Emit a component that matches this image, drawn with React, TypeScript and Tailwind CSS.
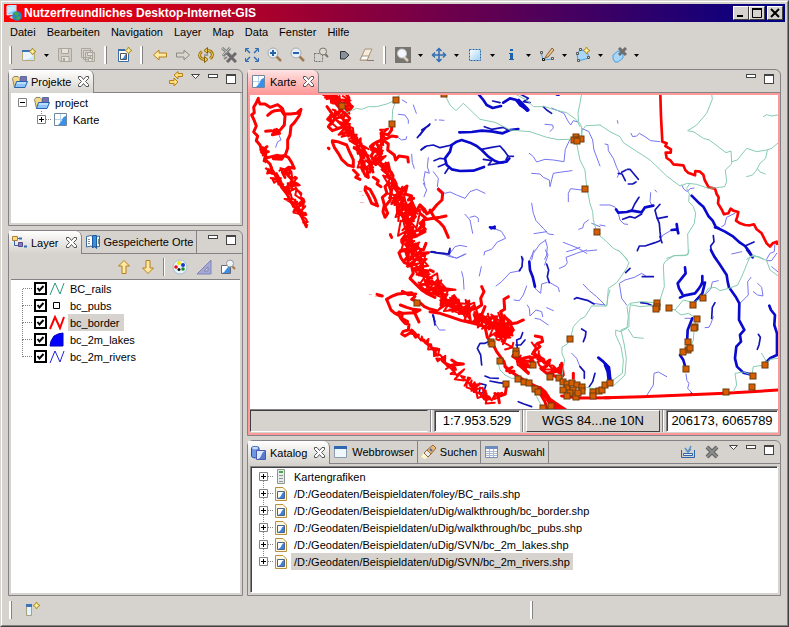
import type { ReactNode } from 'react';

/* ---------- map data ---------- */

type Tile = {
  x: number;
  y: number;
  rails: string[];
  rivers: string[];
  lakes: string[];
  wide: string[];
  border: string[];
};

// Each tile is digitised at three units per map pixel.
const tiles: Tile[] = [
  {
    x: 245,
    y: 90,
    rails: [
      '290,50 305,68 335,55 350,58 370,50 395,50 425,42 454,30 463,14',
      '450,38 443,60 441,103',
    ],
    rivers: [
      '92,172 98,155 108,150 102,135',
      '472,30 485,38',
      '505,45 514,70',
      '460,73 480,75 490,90 490,100',
      '460,143 470,150 483,148 485,140',
      '500,193 502,218 508,235',
      '540,247 536,270 540,285',
    ],
    lakes: ['517,143 540,116', '528,180 540,170'],
    wide: [],
    border: [
      '40,25 34,38 26,52 28,68 20,75 28,92 34,108 26,126 38,138 34,152 45,165 50,180 62,190 62,210 75,222 80,235',
      '40,30 45,42 60,42 75,52 98,44 112,55 118,72 136,72 155,70 168,58 162,78 148,98 138,108 135,135 128,150 128,175 122,192',
      '68,76 80,66 90,62 108,60 120,78 118,105 104,122 88,120',
      '62,124 78,122 104,130 82,134 95,118',
      '48,172 62,178 55,190 70,185 50,182 66,170',
      '60,205 80,200 95,196 115,200 110,208 85,206 118,196 130,202 140,218 148,235 130,232 120,240 128,250 112,246 120,262',
      '78,235 96,262 110,292 126,312 142,342 160,366 170,380 184,410',
      '150,262 154,264',
      '236,14 250,18 246,26 262,22 270,14 284,28 272,40 290,62 300,70',
      '305,14 312,24 302,34 322,50 314,60',
      '246,50 262,72 248,88 260,96 250,110 262,122 290,112 300,96 290,80 270,86 258,102',
      '300,70 314,85 298,110 312,128 330,140 345,160 360,185 372,210 382,240',
      '262,152 278,155 305,165 312,182 325,210 325,230 308,225 290,208 280,190 268,172 262,156',
      '250,174 252,176',
      '325,240 340,255 332,262 345,268',
      '345,190 352,212 350,235 362,258 370,262 366,240 356,222',
      '440,106 440,120 430,134 408,130 412,150 395,156 385,162 376,170 388,182 378,198 388,212 376,228 384,246',
      '412,148 430,162 428,180 448,195 452,210 462,198 488,202 490,216',
      '425,146 440,138 456,140',
      '395,160 410,190 398,206 412,225 432,238 444,256 442,278 456,290',
      '362,292 375,298 390,326 398,348 380,340 370,318 360,300 362,290',
      '432,278 420,290 426,310 412,322 418,345 414,365 420,382 428,370 420,350 436,330 438,300 430,280',
      '385,262 400,272 396,282 408,290',
      '450,290 470,300 486,288 480,312 500,318 490,330 506,325',
      '436,434 440,442',
      '470,350 500,345 480,370 510,376 490,400 525,345 538,365',
      '490,430 520,420 536,400',
      '486,440 510,440 540,425',
      '466,485 480,478 488,500 480,510',
      '490,460 490,510',
    ],
  },
  {
    x: 420,
    y: 90,
    rails: [
      '75,15 90,45 108,62 130,40 145,54 180,88 225,97 270,120 330,125 380,142 415,149 445,148 466,145',
      '285,12 320,30 340,50 375,50 398,58 440,68 470,90 480,110',
      '485,12 480,40 474,70 476,95 485,110 485,140',
      '540,105 498,107 487,120 485,135 470,150',
      '470,160 480,210 495,240 500,290 510,340 518,365 520,390 530,425',
    ],
    rivers: [
      '395,54 432,70 442,90 452,105 460,92 474,96',
      '375,103 398,105 400,115 390,124',
      '486,116 506,124 518,150 522,180 540,228',
      '450,148 436,178 432,215 400,210 375,208 350,216 340,200 328,190',
      '335,250 360,252 370,262 388,270 390,290 400,250 425,246 456,242',
      '485,300 452,296 445,310 445,335',
      '505,390 492,400 488,414 476,418',
      '515,400 540,410',
      '335,340 340,370 348,392 370,415 385,432 400,434',
      '380,425 342,431',
      '378,450 360,462 340,490 335,510',
      '376,450 382,470 380,495 374,508',
      '430,457 450,465 475,475 500,490',
      '480,472 460,480 440,485',
      '40,245 55,265 52,290 75,310 90,306 110,315 135,325 150,305 170,298 195,310',
      '25,203 22,230 28,250 15,245',
      '10,280 20,300 12,320',
      '135,373 150,390 158,430',
      '150,382 165,378 175,385 175,395',
      '222,415 244,424 257,445 232,456 215,478 194,485 192,495',
      '90,490 105,470 120,466 140,470',
      '85,495 110,505 138,492',
      '45,90 50,90',
      '58,90 72,91',
    ],
    lakes: [
      '218,33 240,38',
      '300,12 325,25 310,35 330,38',
      '193,110 215,118 250,112 268,122',
      '5,178 20,168 40,165 60,173 95,165',
      '42,212 60,205 75,207',
      '55,230 75,222',
      '75,250 85,235',
      '190,208 215,212 205,225 250,218',
      '185,178 215,172 240,168 255,185 264,198 280,199',
      '264,198 258,210',
      '0,135 12,118 30,102',
      '5,120 28,106',
      '35,486 60,490 85,492 90,475',
      '370,50 380,60 395,70',
      '305,500 308,510',
    ],
    wide: [
      '175,12 190,30 200,45 218,54 243,48',
      '250,38 270,25 290,30 300,45 325,60',
      '290,32 322,62',
      '296,30 322,56',
      '118,127 155,126 185,122 215,124 248,130 270,120 295,117',
      '95,165 110,155 125,150 150,158 170,168 185,180 205,200 225,213 240,218 260,215 268,205',
      '95,165 90,185 75,205 80,225 95,238 120,243 160,242 192,231',
      '210,412 224,415',
      '214,415 224,410',
      '410,13 416,14',
    ],
    border: [
      '0,345 14,358 20,372 38,360 50,345 66,330 68,310 55,298',
      '0,415 12,405 10,390 40,385 60,382 78,378',
      '30,360 44,385 60,398 72,412 85,442',
      '0,370 18,385 0,400 16,418 0,425',
      '18,460 10,480 0,478',
      '0,490 25,488 10,495',
    ],
  },
  {
    x: 600,
    y: 90,
    rails: [
      '0,105 30,125 60,140 70,158 150,210 200,258 240,288 262,280 290,283 325,295 350,293 374,290 380,275 376,240 395,222 395,215',
      '335,12 337,28 320,70 290,105 263,122 282,126 310,145 328,150 378,188 393,183 395,215 412,210 440,175 470,185 500,180 515,175 533,160',
      '502,182 497,205 480,220 470,240 458,255 440,260',
      '472,235 480,246 496,252',
      '490,80 500,74 515,78 533,75',
      '270,280 260,295 268,312 266,335 280,350 287,370 283,400 263,432 265,490 255,497 225,497 200,505',
      '0,438 20,455 40,475 60,485 82,508',
      '440,508 460,495 490,508',
    ],
    rivers: [
      '93,130 98,140 110,138 118,130 135,140 152,152 180,155',
      '15,162 24,164 25,182 40,205 50,232 58,248 52,262',
      '0,345 30,345 46,352',
      '55,370 60,390 72,402 83,403',
      '245,285 252,298 262,305 270,296 282,294',
      '365,410 374,405 380,382 405,370',
      '525,460 523,485 510,490 500,508',
      '152,308 150,335 155,344',
      '180,450 188,436 215,420',
      '52,92 54,100',
      '165,300 170,306',
      '0,405 15,408',
    ],
    lakes: [
      '65,247 78,240',
      '82,238 90,238 100,250 115,268',
      '55,250 66,252 76,272',
      '85,282 98,282 108,276',
      '95,362 104,342 117,322',
      '68,388 90,380 105,384 125,372',
      '180,343 165,360 170,380 178,400 180,425 182,440',
      '172,386 202,380',
      '112,482 118,468 135,468 165,458 180,452',
      '180,440 186,458',
      '340,437 342,455 332,468 334,485 350,508',
      '435,468 462,456',
    ],
    wide: [
      '48,358 55,368 80,366 95,362 125,367 135,352 160,347',
      '215,420 232,418 235,430',
      '275,317 298,340 310,350 325,378 338,392 348,412 375,425 400,440 420,458 435,468 448,485 458,502',
      '345,412 355,414',
      '230,402 232,416',
    ],
    border: [],
  },
  {
    x: 245,
    y: 250,
    rails: [],
    rivers: [],
    lakes: ['563,195 570,215', '560,5 570,6'],
    wide: [],
    border: [
      '425,148 438,140 458,132 480,130 500,128 510,140 500,148 525,158 538,170 552,176 575,182',
      '425,148 432,165 438,180 450,190 462,196 468,206 480,220 492,224 490,240 475,244 470,252 480,258 496,248 500,240 512,252',
      '466,165 485,172 505,178 525,180 510,188 480,190 455,190',
      '505,182 512,195 522,216',
      '462,186 472,190 470,205 488,215',
      '472,124 490,134 512,132',
      '396,133 412,138 400,136',
      '462,8 468,24 478,38 490,42 488,20 482,2 466,2',
      '500,50 505,70 495,85 510,100 530,120 545,130 570,142',
      '512,60 548,62 530,75 560,85',
    ],
  },
  {
    x: 430,
    y: 250,
    rails: [
      '540,120 534,140 530,168 485,168 465,200 450,208 430,230 422,265 412,282 396,292 396,310 404,330 398,365 396,385',
      '205,340 210,360 225,375 245,385 265,385 300,405 320,440 336,470',
      '440,410 470,412 500,418 530,405',
    ],
    rivers: [
      '198,108 215,95 240,68 272,62',
      '346,0 354,15 344,45',
      '355,95 372,105 385,112 388,125',
      '312,110 320,120 332,130 335,102 352,97',
      '312,0 306,15 300,28',
      '388,55 405,48 412,38 408,22 440,10 470,0',
      '252,150 268,152 280,135 290,108',
      '292,165 298,175 300,198 318,180 335,185 338,200',
      '315,205 330,208 355,225',
      '350,173 370,182',
      '460,103 478,122 500,140 525,165',
      '490,160 525,165',
      '148,78 154,50',
      '95,65 100,85 102,118',
      '10,5 40,12 60,20 80,24 105,12',
      '15,220 28,240 45,240',
      '425,310 440,325 450,350',
      '470,3 500,0',
    ],
    lakes: [
      '278,25 276,50 268,62',
      '433,147 440,143 460,148 475,152 492,162',
      '10,195 15,225',
      '455,237 468,245 466,260 460,275',
      '175,275 165,280 150,280 142,295 152,315 155,345',
      '262,295 260,270 272,265 278,248',
      '258,285 272,285 285,270',
      '165,378 180,384 205,385',
      '180,393 205,398 225,400',
      '148,400 168,405 160,428 148,430 150,412',
      '265,455 282,462 305,470',
      '495,370 488,395 478,410',
      '450,350 463,365 463,385',
      '350,42 356,60 352,80 358,98',
      '0,6 40,10 58,12 60,0',
    ],
    wide: ['298,35 300,60 308,80 315,110', '505,323 520,335 535,352 540,385'],
    border: [
      '0,60 10,65',
      '155,110 162,125 152,145 155,165 140,175 120,178 105,190',
      '235,140 222,148 224,178 212,185 220,210 205,225',
      '280,210 262,218 240,222 250,240 230,250',
      '165,170 155,195 170,210',
      '0,185 30,190 60,200 95,212 130,220 165,230 172,262 190,285 200,305 222,335 226,350 250,370 290,395 310,405 330,415',
      '225,350 240,368 252,364 230,362 246,352',
      '316,258 335,262 338,275 322,280 330,290 312,305 320,320 300,325',
      '250,320 280,340 300,350 270,348 295,370 262,330 310,335 300,320 280,325',
      '330,325 345,340 360,330 350,348 332,355 350,370 376,365 398,345 392,370 372,352 362,372 388,385',
      '395,340 400,375 392,385',
      '430,370 430,385',
      '230,405 226,432 205,440 208,458',
      '65,330 80,340 100,342 72,345',
      '330,412 345,425 360,448 385,465 408,480',
      '330,430 345,455 352,480',
      '320,412 350,445 375,480',
      '335,425 370,462 395,478',
      '326,415 340,432 362,462 385,478',
      '395,438 450,444 540,443',
    ],
  },
  {
    x: 605,
    y: 250,
    rails: [
      '252,0 248,15 225,16 205,17 180,35 175,45 178,110 165,150',
      '40,0 60,22 72,38 65,55 48,80 35,98 10,115 6,165 0,168',
      '150,158 110,155 75,160 66,170 70,200 66,235 45,245 32,240 32,255 48,290 55,330 52,370 18,395',
      '150,166 105,170 76,164 72,195 72,230 48,240 58,285 64,325 60,375 28,405',
      '70,238 85,262 115,265',
      '190,175 210,180 235,150 265,158 293,143 310,115 330,112 345,122 372,115 398,105 410,80 435,20 462,20 485,32 495,60 520,78',
      '210,180 228,195 250,190 275,205 268,235 265,270 255,295',
      '440,375 415,366 390,370 395,405 385,425',
      '440,380 445,350 480,345 495,328 520,325',
      '470,310 490,345 470,350',
    ],
    rivers: [
      '125,437 145,405 147,370 160,366 185,380',
      '65,165 50,145 43,100 60,90 88,82 110,70 125,80',
      '243,372 246,392 252,400 248,415 262,430',
      '340,92 322,96 318,115 305,130 290,140',
      '325,200 318,220 312,232 300,233',
      '438,82 428,95 430,135 405,160',
      '445,125 458,135 474,138 470,112 458,100',
      '485,32 500,32 515,10',
      '500,50 518,65',
      '380,12 410,5',
      '240,205 260,205',
    ],
    lakes: [
      '75,55 62,68',
      '107,158 125,160 142,167',
      '112,80 145,80',
      '330,158 322,172 320,205',
      '460,253 466,262 462,285 457,298',
      '425,0 440,20',
      '258,430 262,432',
    ],
    wide: [
      '240,52 242,70 218,100 222,115 232,132',
      '225,143 240,136 270,130 282,115 292,100 292,78',
      '290,100 300,98 292,130 270,155',
      '262,205 248,240 246,280',
      '225,315 235,330 242,355',
      '318,0 328,20 342,40 365,75 368,95 372,112 392,140 403,160 402,210 418,240 405,255 408,275 394,290 390,325 396,350 415,368 440,374',
      '493,167 498,180 510,195 508,225 516,250 516,315 495,325 485,335',
      '0,340 12,352 15,380 17,395',
      '0,345 8,365 12,400',
    ],
    border: ['0,443 110,440 220,436 360,430 520,420'],
  },
];

const alberta =
  '181,12 183,80 187,155 200,160 196,168 213,178 212,188 197,188 200,204 212,212 220,223 250,226 256,240 264,248 285,256 286,243 300,245 310,254 314,270 326,292 345,296 350,312 356,322 354,340 366,360 372,373 385,370 392,356 400,362 415,366 412,380 408,392 420,400 435,405 450,406 462,403 470,418 485,430 500,460 510,470 518,460 530,455 533,465';

// Spines of the broken fjord coast: x, y and half width of the band.
const fjords: number[][][] = [
  [[262, 148, 3], [265, 154, 4], [268, 162, 3]],
  [[268, 168, 3], [276, 178, 6], [286, 190, 7], [295, 204, 7], [303, 215, 5], [307, 226, 2]],
  [[282, 168, 4], [291, 178, 6], [297, 192, 6], [303, 210, 5]],
  [[327, 94, 4], [333, 98, 5], [330, 102, 3]],
  [[335, 95, 5], [340, 104, 7], [335, 118, 8], [341, 125, 9], [350, 136, 6], [358, 148, 7], [364, 162, 8], [369, 176, 5]],
  [[346, 96, 5], [347, 110, 6], [344, 122, 6], [356, 140, 5], [366, 152, 6], [374, 166, 8]],
  [[385, 128, 5], [384, 138, 5], [380, 148, 6], [376, 160, 8]],
  [[374, 148, 5], [380, 158, 8], [386, 170, 8], [392, 184, 7], [398, 194, 9], [404, 208, 13], [409, 222, 14], [406, 236, 9], [411, 250, 10], [417, 268, 9], [426, 280, 10]],
  [[393, 188, 6], [400, 204, 10], [412, 214, 12], [408, 230, 11], [412, 246, 8], [420, 262, 8], [427, 276, 10], [436, 288, 11], [450, 298, 12], [464, 308, 11], [480, 317, 8], [494, 326, 10], [505, 336, 10], [511, 347, 6]],
  [[424, 286, 9], [438, 295, 12], [452, 306, 10], [466, 314, 8], [484, 322, 7], [500, 322, 11], [508, 332, 9], [498, 340, 8]],
  [[492, 318, 6], [502, 326, 10], [508, 338, 8]],
  [[514, 356, 4], [524, 364, 6], [528, 371, 4]],
  [[534, 345, 4], [537, 357, 6], [545, 366, 6], [556, 372, 6], [562, 366, 4]],
  [[412, 333, 3], [420, 338, 5], [430, 345, 6], [436, 354, 5], [446, 364, 5], [458, 375, 7], [470, 385, 6], [482, 395, 6], [492, 402, 5]],
  [[470, 384, 5], [484, 397, 5], [496, 396, 5], [502, 394, 3]],
];

function tracedCoast(spine: number[][], seed: number): string {
  let state = seed;
  const random = () => {
    state = (state * 16807) % 2147483647;
    return state / 2147483647 - 0.5;
  };
  const points: string[] = [];
  for (let i = 0; i < spine.length - 1; i++) {
    const [x1, y1, w1] = spine[i];
    const [x2, y2, w2] = spine[i + 1];
    const steps = Math.max(5, Math.round(Math.hypot(x2 - x1, y2 - y1) / 1.1));
    for (let s = 0; s < steps; s++) {
      const t = s / steps;
      const w = (w1 + (w2 - w1) * t) * 1.8;
      points.push(
        `${(x1 + (x2 - x1) * t + random() * w).toFixed(1)},${(y1 + (y2 - y1) * t + random() * w).toFixed(1)}`,
      );
    }
  }
  return points.join(' ');
}

const coastLines = fjords.map((spine, i) => tracedCoast(spine, 4211 + i * 977));

const pubs: number[][] = [
  [342, 106], [396, 100], [392, 124], [444, 94], [576, 137], [574, 140], [581, 139], [577, 141], [585, 189], [597, 232],
  [417, 303], [491, 342], [492, 344], [500, 361], [516, 351], [516, 354], [533, 365], [550, 377], [559, 378], [506, 384],
  [518, 379], [524, 382], [529, 383], [535, 389], [538, 392], [543, 408], [551, 406], [570, 339], [563, 382], [567, 384],
  [567, 388], [572, 383], [577, 385], [563, 390], [573, 390], [570, 393], [582, 387], [582, 391], [567, 396], [576, 397], [578, 393],
  [593, 392], [593, 396], [599, 391], [602, 390], [605, 385], [610, 383], [657, 303], [657, 307], [656, 309], [669, 308],
  [693, 305], [703, 298], [697, 319], [695, 327], [694, 328], [688, 342], [688, 350], [690, 348], [683, 352], [686, 369],
  [726, 392], [752, 387], [753, 376], [765, 365],
];

function Lines({ of, stroke, width }: { of: 'rails' | 'rivers' | 'lakes' | 'wide' | 'border'; stroke: string; width: number }) {
  return (
    <g fill="none" stroke={stroke} strokeWidth={width} strokeLinejoin="round" strokeLinecap="round">
      {tiles.map((tile) => (
        <g key={`${tile.x}-${tile.y}`} transform={`translate(${tile.x} ${tile.y}) scale(0.3333)`}>
          {tile[of].map((points) => (
            <polyline key={points} points={points} />
          ))}
        </g>
      ))}
    </g>
  );
}

function MapCanvas() {
  return (
    <svg role="img" aria-label="Karte" viewBox="250 94 528 316" preserveAspectRatio="xMidYMid slice" className="block min-h-0 w-full flex-1 bg-white">
      <Lines of="rivers" stroke="#7474f2" width={3} />
      <Lines of="lakes" stroke="#1414b8" width={5} />
      <Lines of="wide" stroke="#0a0acc" width={8} />
      <Lines of="border" stroke="#ff0000" width={9} />
      <g fill="none" stroke="#ff0000" strokeWidth="2" strokeLinejoin="round">
        {coastLines.map((points) => (
          <polyline key={points.slice(0, 20)} points={points} />
        ))}
        <polyline points={alberta} transform="translate(600 90) scale(0.3333)" strokeWidth="8" />
      </g>
      <g fill="#ffb4b4">
        <rect x="359" y="191" width="3" height="1" />
        <rect x="362" y="195" width="2" height="1" />
        <rect x="360" y="202" width="4" height="1" />
        <rect x="369" y="294" width="3" height="1" />
        <rect x="375" y="296" width="2" height="1" />
      </g>
      <Lines of="rails" stroke="#86ccb0" width={3} />
      <g fill="#d65e00" stroke="#6b3d10" strokeWidth="1">
        {pubs.map(([x, y], i) => (
          <rect key={i} x={x - 3} y={y - 3} width="6" height="6" />
        ))}
      </g>
    </svg>
  );
}

/* ---------- icons ---------- */

function Icon({ children, w = 16, h = 16 }: { children: ReactNode; w?: number; h?: number }) {
  return (
    <svg aria-hidden="true" width={w} height={h} viewBox={`0 0 ${w} ${h}`} fill="none" className="shrink-0">
      {children}
    </svg>
  );
}

const Sparkle = ({ x, y }: { x: number; y: number }) => (
  <g transform={`translate(${x} ${y})`}>
    <path d="M3.5 0 4.7 2.3 7 3.5 4.7 4.7 3.5 7 2.3 4.7 0 3.5 2.3 2.3Z" fill="#fff3a8" stroke="#b08a18" />
  </g>
);

const AppIcon = () => (
  <Icon>
    <path d="M1 1 10 0V9L1 10Z" fill="#8fd0ff" stroke="#dff2ff" />
    <path d="M2 2 9 1V5L2 8Z" fill="#c8ecff" />
    <path d="M3 12 8 10 11 12 6 14Z" fill="#b8c8e0" />
    <circle cx="11" cy="11" r="4.8" fill="#2f7fc8" />
    <path d="M7 8 11 7 13 9 11 11 9 10ZM10 12 14 11 14 14 11 15ZM7 11 9 13 8 14Z" fill="#3fae3a" />
  </Icon>
);

const NewMapIcon = () => (
  <Icon>
    <path d="M1.5 3.5H13.5V13.5H1.5Z" fill="#eaf6ff" stroke="#b8a878" />
    <path d="M1 3H10V5H1Z" fill="#3d74b8" />
    <path d="M13 6V13H3C9 12 12 10 13 6Z" fill="#c8e6ff" />
    <Sparkle x={8} y={1} />
  </Icon>
);

const SaveIcon = () => (
  <Icon>
    <path d="M1.500 1.500H14.500V14.500H3L1.500 13Z" fill="#d0ccc4" stroke="#aaa69e" />
    <path d="M4.500 1.500H11.500V6.500H4.500ZM4.500 9.500H12V14.500H4.500Z" fill="#e6e2da" stroke="#aaa69e" />
    <path d="M6 11H8V14H6Z" fill="#aaa69e" />
  </Icon>
);

const SaveAllIcon = () => (
  <Icon>
    <path d="M1.500 1.500H10.500V10.500H1.500ZM3.500 3.500H12.500V12.500H3.500ZM5.500 5.500H14.500V14.500H5.500Z" fill="#d8d4cc" stroke="#aaa69e" />
    <path d="M7.500 5.500H12.500V8.500H7.500ZM8.500 11.500H12V14.500H8.500Z" fill="#e6e2da" stroke="#aaa69e" />
  </Icon>
);

const NewProjectIcon = () => (
  <Icon>
    <path d="M2.500 3.500H12.500V14.500H2.500Z" fill="#fff" stroke="#3a6ea5" />
    <path d="M2 2H9V4H2Z" fill="#3a6ea5" />
    <path d="M4.500 6.500H10.500V12.500H4.500Z" fill="#fff" stroke="#555" />
    <path d="M10 7V12H5C8 12 8 8 10 7Z" fill="#3b8be0" />
    <Sparkle x={9} y={0} />
  </Icon>
);

const BackIcon = () => (
  <Icon>
    <path d="M1.500 8 7 3V6H14.500V10H7V13Z" fill="#ffe9a0" stroke="#b57f1c" strokeLinejoin="round" />
  </Icon>
);

const ForwardIcon = () => (
  <Icon>
    <path d="M14.500 8 9 3V6H1.500V10H9V13Z" fill="#d9d6ce" stroke="#8c8a84" strokeLinejoin="round" />
  </Icon>
);

const RefreshIcon = () => (
  <Icon>
    <path d="M7 12.500C1 12.500 0 7 4 4.500M9 3.500C15 3.500 16 9 12 11.500" stroke="#9a7410" strokeWidth="3" />
    <path d="M7 12.500C1 12.500 0 7 4 4.500M9 3.500C15 3.500 16 9 12 11.500" stroke="#ffd95a" strokeWidth="1" />
    <path d="M6.500 9.500 10 12.500 6.500 15.500ZM9.500 0.500 6 3.500 9.500 6.500Z" fill="#f0c648" stroke="#86640c" />
    <path d="M6 8H10" stroke="#666" />
  </Icon>
);

const StopIcon = () => (
  <Icon>
    <path d="M1 1 10 9M9 1 2 9" stroke="#808080" strokeWidth="3" />
    <path d="M1 1 9 8M9 1 2 8" stroke="#c8c8c8" />
    <path d="M6 6 15 15M15 6 6 15" stroke="#6b6b6b" strokeWidth="3" />
    <path d="M3 12 6 10" stroke="#888" strokeWidth="2" />
  </Icon>
);

const ExtentIcon = () => (
  <Icon>
    <path d="M1.500 5V1.500H5M11 1.500H14.500V5M14.500 11V14.500H11M5 14.500H1.500V11" stroke="#2f6eb5" />
    <path d="M2 2 6 6M14 2 10 6M14 14 10 10M2 14 6 10" stroke="#2f6eb5" strokeWidth="1.500" />
  </Icon>
);

const ZoomIcon = ({ plus }: { plus: boolean }) => (
  <Icon>
    <path d="M9 9 14 14" stroke="#a07a50" strokeWidth="2.500" />
    <circle cx="6" cy="6" r="5" fill="#e6f0fa" stroke="#a8a8a8" />
    <path d={plus ? 'M3 6H9M6 3V9' : 'M3 6H9'} stroke="#2862a8" strokeWidth="2" />
  </Icon>
);

const ZoomSelectionIcon = () => (
  <Icon>
    <path d="M1.500 6.500H9.500V14.500H1.500Z" stroke="#77746e" strokeDasharray="2 1" />
    <path d="M12 7 15 10" stroke="#77746e" strokeWidth="2" />
    <circle cx="10" cy="4.500" r="3.500" fill="#dedad2" stroke="#77746e" />
  </Icon>
);

const NextIcon = () => (
  <Icon>
    <path d="M4.500 4.500H9L13 8 9 12H4.500Z" fill="#89919a" stroke="#30343a" />
  </Icon>
);

const EraserIcon = () => (
  <Icon>
    <path d="M6 2H13L8 13H1Z" fill="#f6ead8" stroke="#a8937a" />
    <path d="M3 9H10L8 13H1Z" fill="#fff" stroke="#a8937a" />
    <path d="M8 13.500H15" stroke="#8a7a6a" />
  </Icon>
);

const MagnifierToolIcon = () => (
  <Icon>
    <path d="M0 0H16V16H0Z" fill="#787470" />
    <path d="M9 10 13 14" stroke="#dccfb8" strokeWidth="2.500" />
    <circle cx="7" cy="6.500" r="4.500" fill="#f4f8fc" stroke="#c8c8c8" />
  </Icon>
);

const PanIcon = () => (
  <Icon>
    <path d="M8 2V14M2 8H14" stroke="#2f6eb5" strokeWidth="1.500" />
    <path d="M5.500 4 8 1.500 10.500 4M5.500 12 8 14.500 10.500 12M4 5.500 1.500 8 4 10.500M12 5.500 14.500 8 12 10.500" stroke="#2f6eb5" strokeWidth="1.500" />
  </Icon>
);

const SelectBoxIcon = () => (
  <Icon>
    <defs>
      <linearGradient id="selectFill" x1="0" y1="0" x2="1" y2="1">
        <stop offset="0" stopColor="#fff" />
        <stop offset="1" stopColor="#9cd0f4" />
      </linearGradient>
    </defs>
    <path d="M2.500 2.500H13.500V13.500H2.500Z" fill="url(#selectFill)" stroke="#2868a8" strokeDasharray="2 1" />
  </Icon>
);

const InfoIcon = () => (
  <Icon>
    <path d="M7 2H10V4H7ZM6 6H10V12H11V13H6V12H7V7H6Z" fill="#1f62ac" />
  </Icon>
);

const EditLineIcon = () => (
  <Icon>
    <path d="M2 5 4 13 14 12" stroke="#4aa0e0" />
    <path d="M1.500 4.500H3.500V6.500H1.500ZM12.500 10.500H14.500V12.500H12.500Z" fill="#ddd" stroke="#555" />
    <path d="M3.500 11.500H5.500V13.500H3.500Z" fill="#ffe860" stroke="#111" />
    <path d="M7 9 13 1 15 3 9 10 6 11Z" fill="#eac488" stroke="#8a6038" />
  </Icon>
);

const AddPolygonIcon = () => (
  <Icon>
    <path d="M5 3 12 4 14 11 3 14 2 7Z" fill="#a8d6f8" stroke="#4aa0e0" />
    <path d="M4.500 1.500H6.500V3.500H4.500ZM1.500 5.500H3.500V7.500H1.500ZM2.500 12.500H4.500V14.500H2.500ZM12.500 9.500H14.500V11.500H12.500Z" fill="#ddd" stroke="#555" />
    <Sparkle x={8} y={0} />
  </Icon>
);

const DeletePolygonIcon = () => (
  <Icon>
    <path d="M2 8 7 4 12 5 12 11 7 15 4 15 2 12Z" fill="#a8d6f8" stroke="#4aa0e0" />
    <path d="M8 1 15 8M15 1 8 8" stroke="#6e6e6e" strokeWidth="3" />
  </Icon>
);

const ProjectIcon = () => (
  <Icon>
    <path d="M0.500 4.500 2 2.500H6L8 4.500V13.500H2.500Z" fill="#f5d888" stroke="#8e8760" />
    <path d="M8.500 2.500H14.500V9H8.500Z" fill="#7a6fb0" stroke="#5a6c98" />
    <path d="M2.500 13.500 4.500 7.500H15.500L13 13.500Z" fill="#8cc4fc" stroke="#2a62b0" />
    <path d="M5 9H14" stroke="#e8f5ff" />
  </Icon>
);

const MapIcon = () => (
  <Icon>
    <path d="M1.500 1.500H13.500V13.500H1.500Z" fill="#fff" stroke="#6f86a0" />
    <path d="M7.500 2V13M2 7.500H13" stroke="#b8d0e8" />
    <path d="M13 4C8 5 11 8 5 13H13Z" fill="#3a90e8" />
  </Icon>
);

const LinkIcon = () => (
  <Icon>
    <path d="M6 4 10 0.500V2.500H14.500V5.500H10V8ZM10 11 6 15V12.500H1.500V9.500H6V7Z" fill="#ffdd78" stroke="#b57f1c" strokeLinejoin="round" />
  </Icon>
);

const LayersIcon = () => (
  <Icon>
    <path d="M2.500 6V10.500H7M5 3.500H9" stroke="#3a62a0" />
    <path d="M0.500 1.500H5.500V5.500H0.500Z" fill="#ffdc80" stroke="#b08030" />
    <path d="M6.500 7.500H10.500V11.500H6.500Z" fill="#8a7cba" stroke="#54488a" />
    <path d="M7 3.500H10M12 11.500H15" stroke="#2f6eb5" strokeWidth="2" />
  </Icon>
);

const BookIcon = () => (
  <Icon>
    <path d="M1.500 2.500 6 1.500 8 3V13L6 12 1.500 13Z" fill="#fff" stroke="#3d6a98" />
    <path d="M8 3 14.500 2V12.500L8 13Z" fill="#eaf4ff" stroke="#3d6a98" />
    <path d="M7.500 1.500H11.500V14.500L9.500 12 7.500 14Z" fill="#3a90dc" stroke="#1b5a9c" />
    <path d="M3 5.500H5M3 7.500H5M3 9.500H5M13.500 5V10" stroke="#888" />
  </Icon>
);

const VerticalArrowIcon = ({ down }: { down: boolean }) => (
  <Icon>
    <path
      d={down ? 'M8 14.500 2.500 9H6V1.500H10V9H13.500Z' : 'M8 1.500 2.500 7H6V14.500H10V7H13.500Z'}
      fill="#ffe9a0"
      stroke="#b57f1c"
      strokeLinejoin="round"
    />
  </Icon>
);

const PaletteIcon = () => (
  <Icon>
    <circle cx="8" cy="8" r="7" fill="#e8f4fc" stroke="#a8bccc" />
    <circle cx="7" cy="4" r="2" fill="#f4e800" />
    <circle cx="4" cy="8" r="1.800" fill="#e81010" />
    <circle cx="11" cy="6" r="2" fill="#1838c8" />
    <circle cx="11" cy="10" r="1.800" fill="#188a28" />
    <circle cx="7" cy="10.500" r="1.500" fill="#111" />
  </Icon>
);

const SetSquareIcon = () => (
  <Icon>
    <path d="M15 1V15H1ZM12 8V12H8Z" fill="#a4a8d4" fillRule="evenodd" stroke="#8084b8" />
  </Icon>
);

const MapZoomIcon = () => (
  <Icon>
    <path d="M1.500 6.500H10.500V14.500H1.500Z" fill="#fff" stroke="#667" />
    <path d="M10 7V14H2C6 13 6 8 10 7Z" fill="#3a90e8" />
    <path d="M12 7 15 10" stroke="#a07a50" strokeWidth="2" />
    <circle cx="10" cy="4.500" r="3.500" fill="#eef4fa" stroke="#999" />
  </Icon>
);

const CatalogIcon = () => (
  <Icon>
    <path d="M0.500 3C0.500 1 8 1 8 3V11C8 13.500 0.500 13.500 0.500 11Z" fill="#6d96e4" stroke="#2a4fa0" />
    <ellipse cx="4" cy="3" rx="3" ry="1.200" fill="#c8dcff" />
    <path d="M5.500 5.500H14.500V14.500H5.500Z" fill="#dbe6ff" stroke="#4b5aa8" />
    <path d="M14 6V14H7C11 13 10 7 14 6Z" fill="#5578d0" />
  </Icon>
);

const BrowserIcon = () => (
  <Icon>
    <path d="M1.500 2.500H13.500V13.500H1.500Z" fill="#f0f8ff" stroke="#8c9ab0" />
    <path d="M1 2H14V5H1Z" fill="#2f68b0" />
  </Icon>
);

const TorchIcon = () => (
  <Icon>
    <path d="M0 13 4 7 9 11 4 15Z" fill="#fff8c8" />
    <path d="M3 9 6 6 10 10 7 13Z" fill="#e8e8f0" stroke="#886840" />
    <path d="M6 6 12 1 15 4 10 10Z" fill="#e8b878" stroke="#9a6a34" />
    <path d="M9 5 11 7" stroke="#5068a0" strokeWidth="2" />
  </Icon>
);

const TableIcon = () => (
  <Icon>
    <path d="M1.500 2.500H13.500V13.500H1.500Z" fill="#fff" stroke="#7890b8" />
    <path d="M1 2H14V5H1Z" fill="#6c8cc0" />
    <path d="M2 7.500H13M2 9.500H13M2 11.500H13M5.500 5V13M9.500 5V13" stroke="#a8b8d0" />
  </Icon>
);

const ImportIcon = () => (
  <Icon>
    <path d="M1.500 6V13.500H14.500V6" stroke="#2d65a8" />
    <path d="M3.500 9.500H12.500V11.500H3.500Z" fill="#e8f2fc" stroke="#2d65a8" />
    <path d="M5 4 8 8 11 5M11 2 8 8" stroke="#5590cc" strokeWidth="1.500" />
  </Icon>
);

const RemoveIcon = () => (
  <Icon>
    <path d="M3 3 13 13M13 3 3 13" stroke="#606060" strokeWidth="4" />
    <path d="M3 3 13 13M13 3 3 13" stroke="#8c8c8c" strokeWidth="2" />
  </Icon>
);

const ServerIcon = () => (
  <Icon w={12}>
    <path d="M2.500 0.500H9.500V14.500H2.500Z" fill="#e8ecea" stroke="#8a9490" />
    <path d="M4 2H8V4H4Z" fill="#48a848" />
    <path d="M4 6.500H8M4 9.500H8M4 12.500H8" stroke="#8a9490" />
  </Icon>
);

const ShapeFileIcon = () => (
  <Icon w={12}>
    <path d="M0.500 1.500H8L11.500 5V14.500H0.500Z" fill="#fdf6e0" stroke="#b89040" />
    <path d="M2.500 5.500H9.500V12.500H2.500Z" fill="#fff" stroke="#4a6488" />
    <path d="M9 6V12H3C7 11 6 7 9 6Z" fill="#3a80dc" />
  </Icon>
);

const FastViewIcon = () => (
  <Icon>
    <path d="M1.500 2.500H6.500V13.500H1.500Z" fill="#e4f4fc" stroke="#a8a078" />
    <path d="M1 2H7V5H1Z" fill="#3d74b8" />
    <Sparkle x={8} y={0} />
  </Icon>
);

const CloseGlyph = () => (
  <Icon w={13} h={13}>
    <path
      d="M1.500 1.500H4L6.500 4.500 9 1.500H11.500V3.500L8.500 6.500 11.500 9.500V11.500H9L6.500 8.500 4 11.500H1.500V9.500L4.500 6.500 1.500 3.500Z"
      fill="#fff"
      stroke="#555"
    />
  </Icon>
);

const ZigZag = ({ color, width = 1 }: { color: string; width?: number }) => (
  <Icon>
    <path d="M1 14 6 2 11 13 15 2" stroke={color} strokeWidth={width} />
  </Icon>
);

/* ---------- shared controls ---------- */

function ToolButton({ label, children }: { label: string; children: ReactNode }) {
  return (
    <button type="button" aria-label={label} className="flex h-6 w-[23px] shrink-0 items-center justify-center">
      {children}
    </button>
  );
}

function DropArrow({ label }: { label: string }) {
  return (
    <button type="button" aria-label={label} className="flex h-6 w-[13px] shrink-0 items-center justify-center">
      <Icon w={5} h={3}>
        <path d="M0 0H5L2.500 3Z" fill="#000" />
      </Icon>
    </button>
  );
}

const Handle = () => <div className="mx-[5px] h-[18px] w-[3px] shrink-0 border-r border-l-2 border-l-white border-r-[#848284]" />;

function ViewButtons({ menu = false }: { menu?: boolean }) {
  return (
    <>
      {menu && (
        <button type="button" aria-label="Menü" className="flex h-[14px] w-[18px] justify-center pt-[3px]">
          <Icon w={9} h={5}>
            <path d="M0.500 0.500H8.500L4.500 4.500Z" fill="#fff" stroke="#444" />
          </Icon>
        </button>
      )}
      <button type="button" aria-label="Minimieren" className="flex h-[14px] w-[18px] justify-center pt-[3px]">
        <span className="h-1 w-[10px] border border-[#444] bg-white" />
      </button>
      <button type="button" aria-label="Maximieren" className="flex h-[14px] w-[18px] justify-center pt-[3px]">
        <span className="h-[10px] w-[10px] border border-t-2 border-[#444] bg-white" />
      </button>
    </>
  );
}

function Tab({ label, icon, active = false, pink = false }: { label: string; icon: ReactNode; active?: boolean; pink?: boolean }) {
  const look = active
    ? pink
      ? 'bg-linear-to-b from-[#ffe4e4] to-[#ff9a9a] rounded-tr-md'
      : 'bg-linear-to-b from-white to-[#d6d3ce] rounded-tr-md'
    : 'border-b';
  return (
    <div className={`flex shrink-0 items-center border-r border-[#848284] pr-[3px] pl-[3px] ${look}`}>
      <button type="button" role="tab" aria-selected={active} className="flex items-center gap-[3px] whitespace-nowrap">
        {icon}
        {label}
      </button>
      {active && (
        <button type="button" aria-label={`${label} schließen`} className="ml-[6px]">
          <CloseGlyph />
        </button>
      )}
    </div>
  );
}

function TabStrip({ tabs, tools }: { tabs: ReactNode; tools: ReactNode }) {
  return (
    <div className="flex h-[23px] shrink-0">
      <div role="tablist" className="flex">
        {tabs}
      </div>
      <div className="flex flex-1 items-start justify-end border-b border-[#848284] pt-[1px] pr-[2px]">{tools}</div>
    </div>
  );
}

function Guide({ open, branch = true, up = false, down = false }: { open?: boolean; branch?: boolean; up?: boolean; down?: boolean }) {
  return (
    <svg aria-hidden="true" width="16" height="17" viewBox="0 0 16 17" fill="none" stroke="#848284" className="shrink-0">
      {up && <path d="M4.500 0V9" strokeDasharray="1 1" />}
      {down && <path d="M4.500 9V17" strokeDasharray="1 1" />}
      {branch && <path d="M5 8.500H15" strokeDasharray="1 1" />}
      {open !== undefined && (
        <>
          <path d="M0.500 4.500H8.500V12.500H0.500Z" fill="#fff" />
          <path d={open ? 'M2 8.500H7' : 'M2 8.500H7M4.500 6V11'} stroke="#000" />
        </>
      )}
    </svg>
  );
}

/* ---------- content ---------- */

const menus = ['Datei', 'Bearbeiten', 'Navigation', 'Layer', 'Map', 'Data', 'Fenster', 'Hilfe'];

const layers = [
  { name: 'BC_rails', icon: <ZigZag color="#2a9a7c" /> },
  {
    name: 'bc_pubs',
    icon: (
      <Icon>
        <path d="M4.500 4.500H10.500V10.500H4.500Z" fill="#fff" stroke="#000" />
      </Icon>
    ),
  },
  { name: 'bc_border', icon: <ZigZag color="#ff0000" width={2} />, selected: true },
  {
    name: 'bc_2m_lakes',
    icon: (
      <Icon>
        <path d="M1 14 2 9 5 4 9 2 14 1V14Z" fill="#0000ff" stroke="#0000c0" />
      </Icon>
    ),
  },
  { name: 'bc_2m_rivers', icon: <ZigZag color="#2020d8" /> },
];

const catalog = [
  'Kartengrafiken',
  '/D:/Geodaten/Beispieldaten/foley/BC_rails.shp',
  '/D:/Geodaten/Beispieldaten/uDig/walkthrough/bc_border.shp',
  '/D:/Geodaten/Beispieldaten/uDig/walkthrough/bc_pubs.shp',
  '/D:/Geodaten/Beispieldaten/uDig/SVN/bc_2m_lakes.shp',
  '/D:/Geodaten/Beispieldaten/uDig/SVN/bc_2m_rivers.shp',
];

function CaptionButton({ label, children }: { label: string; children: ReactNode }) {
  return (
    <button
      type="button"
      aria-label={label}
      className="flex h-[14px] w-4 items-center justify-center border border-t-white border-r-[#404040] border-b-[#404040] border-l-white bg-[#d6d3ce]"
    >
      <Icon w={10} h={10}>{children}</Icon>
    </button>
  );
}

function TitleBar() {
  return (
    <header className="flex h-[18px] shrink-0 items-center bg-[linear-gradient(to_right,#ff0000,#000084)] px-[2px] text-white">
      <AppIcon />
      <h1 className="ml-[2px] flex-1 text-[12px] font-bold">Nutzerfreundliches Desktop-Internet-GIS</h1>
      <CaptionButton label="Fenster minimieren">
        <path d="M1 8H7" stroke="#000" strokeWidth="2" />
      </CaptionButton>
      <CaptionButton label="Fenster maximieren">
        <path d="M0.500 1H9.500V9.500H0.500Z" stroke="#000" />
        <path d="M0 1H10" stroke="#000" strokeWidth="2" />
      </CaptionButton>
      <span className="w-[2px]" />
      <CaptionButton label="Fenster schließen">
        <path d="M1 1 9 9M9 1 1 9" stroke="#000" strokeWidth="2" />
      </CaptionButton>
    </header>
  );
}

function Toolbar() {
  return (
    <div role="toolbar" aria-label="Werkzeuge" className="flex h-[26px] shrink-0 items-center">
      <Handle />
      <ToolButton label="Neu"><NewMapIcon /></ToolButton>
      <DropArrow label="Neu Auswahl" />
      <ToolButton label="Speichern"><SaveIcon /></ToolButton>
      <ToolButton label="Alles speichern"><SaveAllIcon /></ToolButton>
      <Handle />
      <ToolButton label="Neue Karte"><NewProjectIcon /></ToolButton>
      <Handle />
      <ToolButton label="Zurück"><BackIcon /></ToolButton>
      <ToolButton label="Vorwärts"><ForwardIcon /></ToolButton>
      <ToolButton label="Aktualisieren"><RefreshIcon /></ToolButton>
      <ToolButton label="Abbrechen"><StopIcon /></ToolButton>
      <ToolButton label="Gesamtansicht"><ExtentIcon /></ToolButton>
      <ToolButton label="Vergrößern"><ZoomIcon plus /></ToolButton>
      <ToolButton label="Verkleinern"><ZoomIcon plus={false} /></ToolButton>
      <ToolButton label="Auf Auswahl zoomen"><ZoomSelectionIcon /></ToolButton>
      <ToolButton label="Weiter"><NextIcon /></ToolButton>
      <ToolButton label="Radieren"><EraserIcon /></ToolButton>
      <Handle />
      <ToolButton label="Zoom"><MagnifierToolIcon /></ToolButton>
      <DropArrow label="Zoom Auswahl" />
      <ToolButton label="Verschieben"><PanIcon /></ToolButton>
      <DropArrow label="Verschieben Auswahl" />
      <ToolButton label="Auswählen"><SelectBoxIcon /></ToolButton>
      <DropArrow label="Auswählen Auswahl" />
      <ToolButton label="Info"><InfoIcon /></ToolButton>
      <DropArrow label="Info Auswahl" />
      <ToolButton label="Linie bearbeiten"><EditLineIcon /></ToolButton>
      <DropArrow label="Linie Auswahl" />
      <ToolButton label="Polygon anlegen"><AddPolygonIcon /></ToolButton>
      <DropArrow label="Polygon Auswahl" />
      <ToolButton label="Polygon löschen"><DeletePolygonIcon /></ToolButton>
      <DropArrow label="Löschen Auswahl" />
    </div>
  );
}

function ProjectsView() {
  return (
    <section className="flex h-[157px] shrink-0 flex-col rounded-t-md border border-[#848284]">
      <TabStrip
        tabs={<Tab active label="Projekte" icon={<ProjectIcon />} />}
        tools={
          <>
            <button type="button" aria-label="Verknüpfen" className="mr-[2px]"><LinkIcon /></button>
            <ViewButtons menu />
          </>
        }
      />
      <ul className="m-[2px] mt-0 flex-1 bg-white pt-[1px] pl-[7px]">
        <li>
          <div className="flex h-[17px] items-center">
            <Guide open branch={false} />
            <span className="flex items-center gap-[5px]"><ProjectIcon />project</span>
          </div>
          <ul className="pl-[19px]">
            <li className="flex h-[17px] items-center">
              <Guide open={false} up />
              <span className="flex items-center gap-1"><MapIcon />Karte</span>
            </li>
          </ul>
        </li>
      </ul>
    </section>
  );
}

function LayersView() {
  return (
    <section className="flex min-h-0 flex-1 flex-col rounded-t-md border border-[#848284]">
      <TabStrip
        tabs={
          <>
            <Tab active label="Layer" icon={<LayersIcon />} />
            <Tab label="Gespeicherte Orte" icon={<BookIcon />} />
          </>
        }
        tools={<ViewButtons />}
      />
      <div className="mx-[2px] flex h-[26px] shrink-0 items-center justify-end gap-[8px] border-b border-[#848284] pr-1">
        <button type="button" aria-label="Nach oben"><VerticalArrowIcon down={false} /></button>
        <button type="button" aria-label="Nach unten"><VerticalArrowIcon down /></button>
        <span className="-mx-[1px] h-[18px] w-[2px] border-r border-l border-l-[#848284] border-r-white" />
        <button type="button" aria-label="Stil"><PaletteIcon /></button>
        <button type="button" aria-label="Messen"><SetSquareIcon /></button>
        <button type="button" aria-label="Auf Layer zoomen"><MapZoomIcon /></button>
      </div>
      <ul className="m-[2px] mt-0 flex-1 bg-white pl-[7px]">
        {layers.map((layer, i) => (
          <li key={layer.name} className="flex h-[17px] items-center">
            <Guide up={i > 0} down={i < layers.length - 1} />
            <label className="flex items-center">
              <span className="flex pr-[2px]">
                <input
                  type="checkbox"
                  defaultChecked
                  className="peer h-[13px] w-[13px] appearance-none border-2 border-black bg-white"
                />
                <svg aria-hidden="true" width="13" height="13" viewBox="0 0 13 13" fill="none" className="pointer-events-none -ml-[13px] hidden peer-checked:block">
                  <path d="M3.500 6 5.500 8.500 9.500 4" stroke="#000" strokeWidth="2" />
                </svg>
              </span>
              {layer.icon}
              <span className={`ml-[3px] flex h-[17px] items-center px-[2px] pr-1 ${layer.selected ? 'bg-[#d6d3ce]' : ''}`}>{layer.name}</span>
            </label>
          </li>
        ))}
      </ul>
    </section>
  );
}

const Divider = () => <span className="mx-[2px] w-[2px] border-r border-l border-l-[#848284] border-r-white" />;

const sunken = 'border border-t-[#848284] border-l-[#848284] border-r-white border-b-white bg-white text-center outline-none shadow-[inset_1px_1px_0_#404040]';

function MapView() {
  return (
    <section className="flex min-h-0 flex-1 flex-col rounded-t-md border border-[#848284]">
      <TabStrip tabs={<Tab active pink label="Karte" icon={<MapIcon />} />} tools={<ViewButtons />} />
      <div className="flex min-h-0 flex-1 flex-col border-2 border-[#ff9a9a] bg-[#d6d3ce]">
        <MapCanvas />
        <div className="flex h-[24px] shrink-0 border-t border-[#848284] pb-[1px] text-[13px]">
          <div className="flex-1 border border-t-[#404040] border-r-transparent border-b-white border-l-[#404040]" />
          <Divider />
          <input aria-label="Maßstab" defaultValue="1:7.953.529" className={`w-[86px] ${sunken}`} />
          <Divider />
          <button type="button" className="w-[134px] border border-t-white border-r-[#404040] border-b-[#404040] border-l-white">
            WGS 84...ne 10N
          </button>
          <Divider />
          <input aria-label="Koordinaten" defaultValue="206173, 6065789" className={`w-[112px] ${sunken}`} />
        </div>
      </div>
    </section>
  );
}

function CatalogView() {
  return (
    <section className="flex h-[156px] shrink-0 flex-col rounded-t-md border border-[#848284]">
      <TabStrip
        tabs={
          <>
            <Tab active label="Katalog" icon={<CatalogIcon />} />
            <Tab label="Webbrowser" icon={<BrowserIcon />} />
            <Tab label="Suchen" icon={<TorchIcon />} />
            <Tab label="Auswahl" icon={<TableIcon />} />
          </>
        }
        tools={
          <>
            <button type="button" aria-label="Importieren" className="mr-2 pt-[2px]"><ImportIcon /></button>
            <button type="button" aria-label="Entfernen" className="mr-1 pt-[2px]"><RemoveIcon /></button>
            <ViewButtons menu />
          </>
        }
      />
      <ul className="m-[2px] flex-1 border border-t-[#848284] border-r-white border-b-white border-l-[#848284] bg-white pt-[1px] pl-[8px] shadow-[inset_1px_1px_0_#404040]">
        {catalog.map((name, i) => (
          <li key={name} className="flex h-[17px] items-center">
            <Guide open={false} up={i > 0} down={i < catalog.length - 1} />
            {i === 0 ? <ServerIcon /> : <ShapeFileIcon />}
            <span className={`ml-1 flex h-[17px] items-center px-[3px] ${i === catalog.length - 1 ? 'bg-[#d6d3ce]' : ''}`}>{name}</span>
          </li>
        ))}
      </ul>
    </section>
  );
}

export default function App() {
  return (
    <div className="flex h-screen w-full flex-col border border-t-[#d6d3ce] border-r-[#404040] border-b-[#404040] border-l-[#d6d3ce] bg-[#d6d3ce] font-['Liberation_Sans',Arial,sans-serif] text-[11px] leading-4 text-black">
      <div className="flex min-h-0 flex-1 flex-col border border-t-white border-r-[#848284] border-b-[#848284] border-l-white p-[2px]">
        <TitleBar />
        <nav className="flex h-5 shrink-0 items-center gap-[11px] pl-[6px]">
          {menus.map((menu) => (
            <button type="button" key={menu}>{menu}</button>
          ))}
        </nav>
        <Toolbar />
        <main className="flex min-h-0 flex-1 gap-1 px-1 pt-[1px]">
          <div className="flex w-[235px] shrink-0 flex-col gap-1">
            <ProjectsView />
            <LayersView />
          </div>
          <div className="flex min-w-0 flex-1 flex-col gap-1">
            <MapView />
            <CatalogView />
          </div>
        </main>
        <footer className="flex h-[27px] shrink-0 items-center">
          <div className="flex flex-1 items-center">
            <Handle />
            <button type="button" aria-label="Schnellansicht" className="ml-2"><FastViewIcon /></button>
          </div>
          <div className="flex w-1/3 items-center">
            <Handle />
          </div>
        </footer>
      </div>
    </div>
  );
}
